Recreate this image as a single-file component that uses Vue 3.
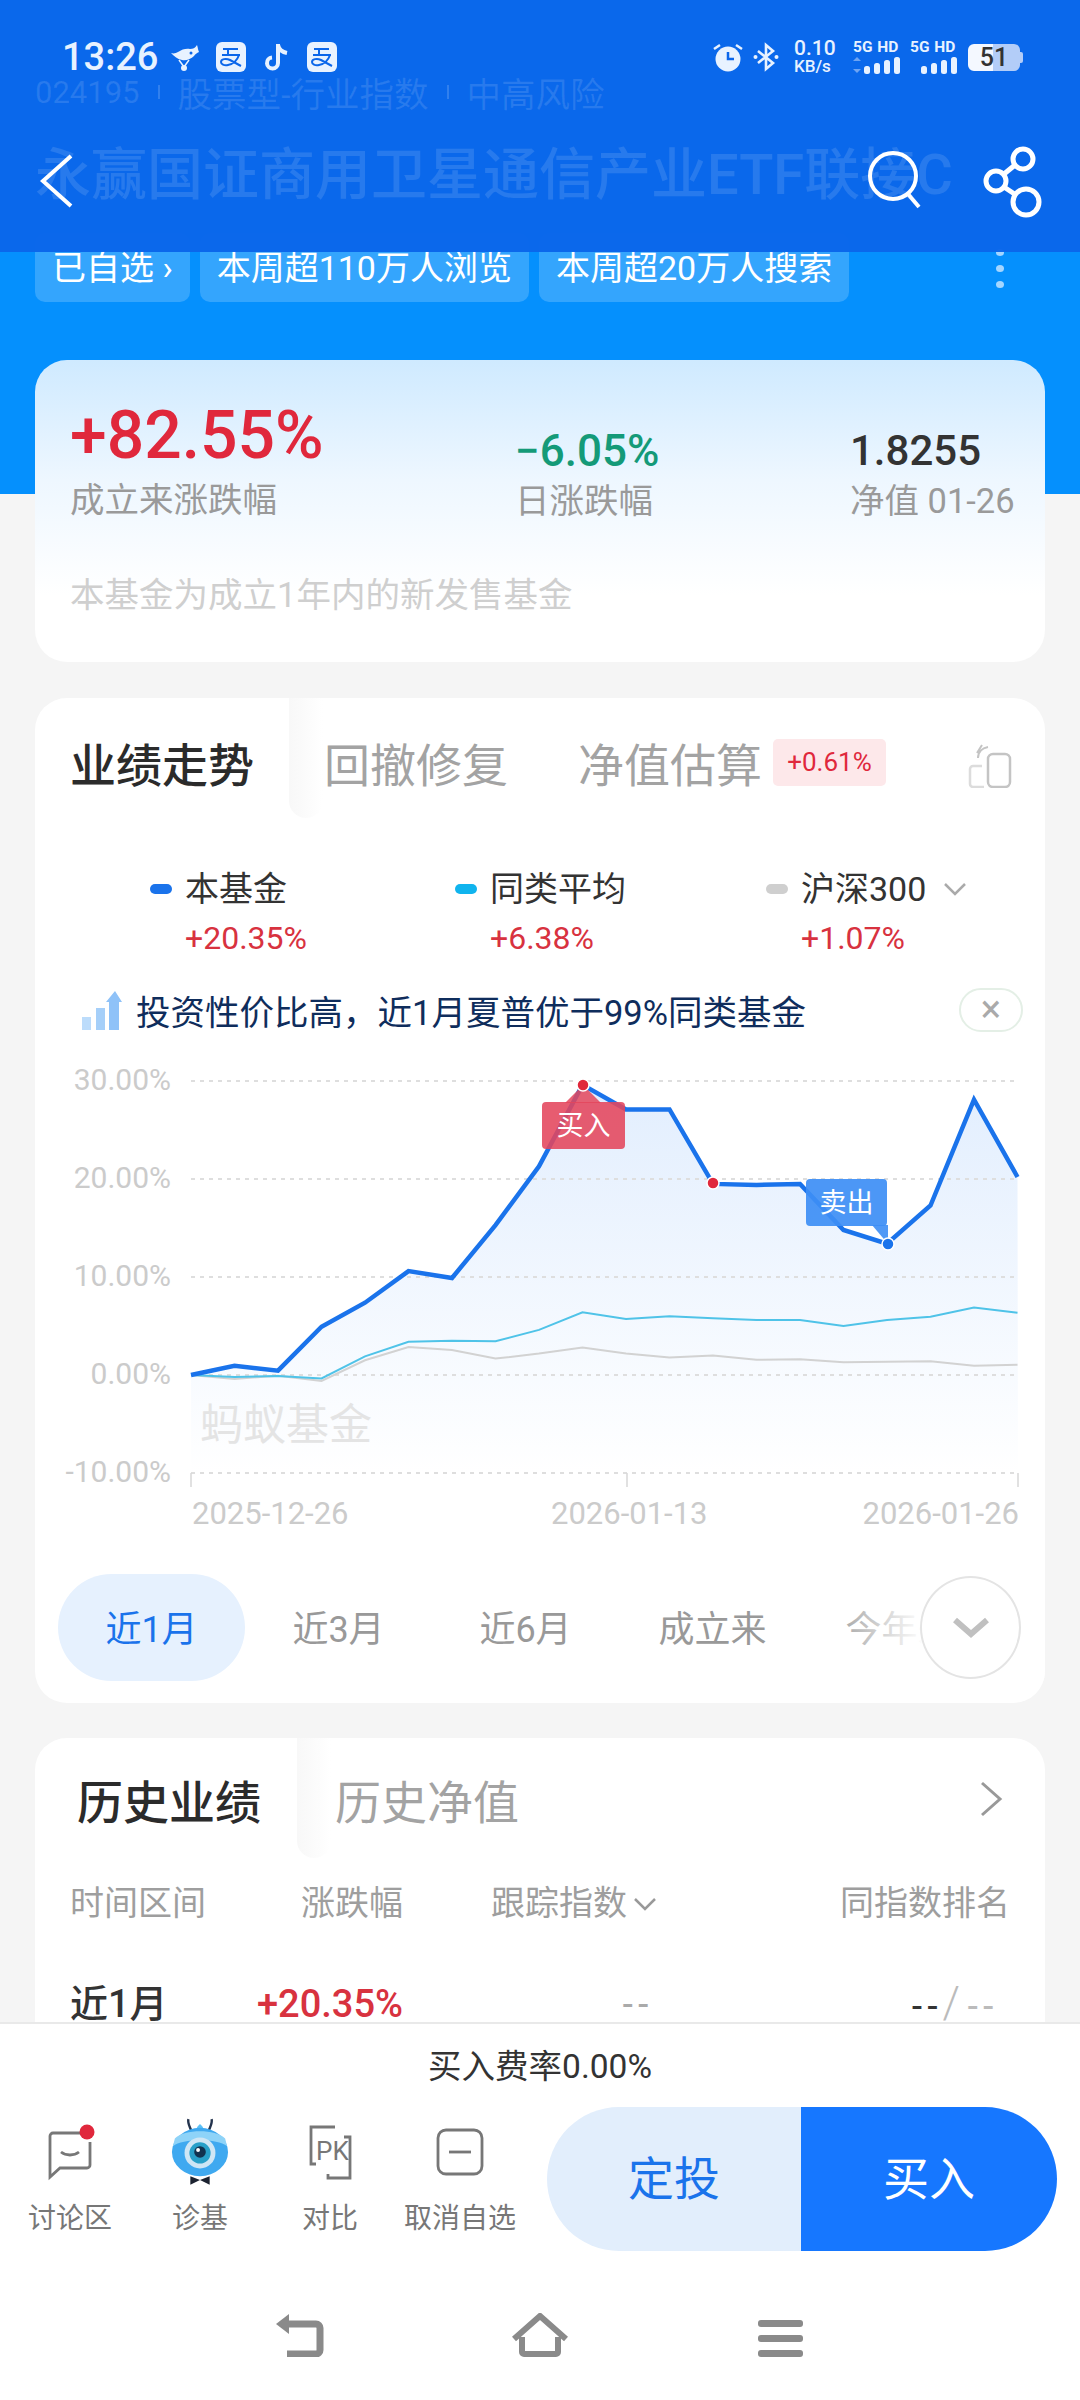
<template>
  <div class="page">
    <header class="top">
      <div class="status">
        <span class="time">13:26</span>
        <svg class="ic-bird" viewBox="0 0 30 30"><path d="M1 11c3 1 5 0 7-1 4-3 9-4 12-3 3 0 5-1 7-4 1 3 1 5 2 7-2 1-4 2-5 4-3 3-8 5-12 4-5-1-8-4-11-7z" fill="#e8f2ff"/><path d="M9 18l5 7 5-7" fill="none" stroke="#e8f2ff" stroke-width="1.500"/><circle cx="14" cy="26" r="3" fill="#e8f2ff"/><circle cx="21" cy="11" r="1.500" fill="#0b66ea"/></svg>
        <svg class="ic-pay" viewBox="0 0 30 30"><rect width="30" height="30" rx="6" fill="#e8f2ff"/><path d="M7 7h15M6 13h18M12 7v6M23 13c-2 6-6 9-11 10-4 1-7-1-7-3 0-3 5-4 9-2l11 6" fill="none" stroke="#0b66ea" stroke-width="2"/></svg>
        <svg class="ic-tt" viewBox="0 0 28 30"><path d="M15 2v19a5.500 5.500 0 1 1-6-5.500M15 3c1 5 4 7 9 8" fill="none" stroke="#e8f2ff" stroke-width="4"/></svg>
        <svg class="ic-pay second" viewBox="0 0 30 30"><rect width="30" height="30" rx="6" fill="#e8f2ff"/><path d="M7 7h15M6 13h18M12 7v6M23 13c-2 6-6 9-11 10-4 1-7-1-7-3 0-3 5-4 9-2l11 6" fill="none" stroke="#0b66ea" stroke-width="2"/></svg>
        <div class="status-right">
          <svg class="ic-alarm" viewBox="0 0 30 30"><circle cx="15" cy="17" r="12.500" fill="#e8f2ff"/><path d="M15 10v7h6" fill="none" stroke="#0b66ea" stroke-width="2.500"/><path d="M1 7l6-4M29 7l-6-4" stroke="#e8f2ff" stroke-width="2.500"/></svg>
          <svg class="ic-bt" viewBox="0 0 26 30"><path d="M5 9l15 12-7 6V3l7 6L5 21" fill="none" stroke="#e8f2ff" stroke-width="2.600"/><circle cx="2.500" cy="15" r="2" fill="#e8f2ff"/><circle cx="23.500" cy="15" r="2" fill="#e8f2ff"/></svg>
          <div class="speed"><b>0.10</b><i>KB/s</i></div>
          <div class="net">
            <span>5G HD</span>
            <svg viewBox="0 0 48 18"><path d="M4 1l4 4H0zM4 17l4-4H0z" fill="#6fa4f2"/><rect x="11" y="10" width="6" height="8" rx="2.500"/><rect x="21" y="7" width="6" height="11" rx="2.500"/><rect x="31" y="4" width="6" height="14" rx="2.500"/><rect x="41" y="1" width="6" height="17" rx="2.500"/></svg>
          </div>
          <div class="net">
            <span>5G HD</span>
            <svg viewBox="0 0 48 18"><rect x="11" y="10" width="6" height="8" rx="2.500"/><rect x="21" y="7" width="6" height="11" rx="2.500"/><rect x="31" y="4" width="6" height="14" rx="2.500"/><rect x="41" y="1" width="6" height="17" rx="2.500"/></svg>
          </div>
          <div class="battery"><span>51</span></div>
        </div>
      </div>
      <div class="sub"><span class="code">024195</span><em></em>股票型-行业指数<em></em>中高风险</div>
      <div class="title">永赢国证商用卫星通信产业ETF联接C</div>
      <svg class="nav-icons" viewBox="0 0 1080 252">
        <path d="M71 156L43 181l28 25" fill="none" stroke="#fff" stroke-width="4"/>
        <circle cx="893" cy="176" r="23" fill="none" stroke="#fff" stroke-width="4"/>
        <path d="M908 194l11 13" stroke="#fff" stroke-width="4"/>
        <g fill="none" stroke="#fff" stroke-width="5">
          <circle cx="1023" cy="159" r="10"/>
          <circle cx="996" cy="181" r="10"/>
          <circle cx="1026" cy="202" r="13"/>
          <path d="M1015 165l-11 9M1004 187l12 8"/>
        </g>
      </svg>
    </header>

    <main class="main">
      <div class="tags">
        <span class="tag">已自选 <small>›</small></span>
        <span class="tag">本周超110万人浏览</span>
        <span class="tag">本周超20万人搜索</span>
        <div class="dots"><i></i><i></i><i></i></div>
      </div>

      <section class="card summary">
        <div class="stats">
          <div>
            <div class="big red">+82.55%</div>
            <div class="lbl">成立来涨跌幅</div>
          </div>
          <div class="stat-sm">
            <div class="mid green">−6.05%</div>
            <div class="lbl">日涨跌幅</div>
          </div>
          <div class="stat-sm">
            <div class="mid dark small-val">1.8255</div>
            <div class="lbl">净值 01-26</div>
          </div>
        </div>
        <div class="notice">本基金为成立1年内的新发售基金</div>
      </section>

      <section class="card trend">
        <div class="tabs">
          <span class="tab on">业绩走势</span>
          <i class="tab-shade"></i>
          <span class="tab t2">回撤修复</span>
          <span class="tab t3">净值估算</span>
          <span class="badge">+0.61%</span>
          <svg class="ic-copy" viewBox="0 0 44 44"><rect x="20" y="10" width="22" height="33" rx="5" fill="none" stroke="#c4c4c4" stroke-width="2.500"/><path d="M14 22H5a3 3 0 0 0-3 3v15a3 3 0 0 0 3 3h11" fill="none" stroke="#dcdcdc" stroke-width="2.500"/><path d="M10 14c0-6 4-10 10-11M14 1l-5 8" fill="none" stroke="#c4c4c4" stroke-width="2"/></svg>
        </div>

        <div class="legend">
          <div v-for="item in legend" :key="item.name" class="legend-item" :class="item.cls">
            <div class="legend-name">
              <i class="dash"></i>{{ item.name }}
              <svg v-if="item.more" class="legend-arrow" viewBox="0 0 24 14"><path d="M2 2l10 10L22 2" fill="none" stroke="#aaa" stroke-width="2.500"/></svg>
            </div>
            <div class="legend-val">{{ item.value }}</div>
          </div>
        </div>

        <div class="tip">
          <svg class="ic-bars" viewBox="0 0 40 40"><rect x="0" y="27" width="9" height="13" fill="#bcdcfb"/><rect x="14" y="18" width="9" height="22" fill="#a5cff9"/><path d="M27 40V12h-3l9-11 7 11h-3v28z" fill="#8fc2f8"/></svg>
          <span>投资性价比高，近1月夏普优于99%同类基金</span>
          <span class="tip-close">×</span>
        </div>

        <svg class="chart" viewBox="35 1050 1010 490">
          <defs>
            <linearGradient id="areaFill" x1="0" y1="0" x2="0" y2="1">
              <stop offset="0" stop-color="#e2eefe"/>
              <stop offset="1" stop-color="#ffffff"/>
            </linearGradient>
          </defs>
          <path :d="areaPath" fill="url(#areaFill)"/>
          <line v-for="g in grid" :key="g.label" x1="191" x2="1018" :y1="g.y" :y2="g.y" stroke="#dedede" stroke-width="2" stroke-dasharray="4 5"/>
          <text v-for="g in grid" :key="'t' + g.label" x="171" :y="g.y + 9" text-anchor="end" class="axis">{{ g.label }}</text>
          <path d="M191 1473v14M627 1473v14M1018 1473v14" stroke="#d8d8d8" stroke-width="1.500"/>
          <text x="192" y="1524" class="date">2025-12-26</text>
          <text x="551" y="1524" class="date">2026-01-13</text>
          <text x="1019" y="1524" text-anchor="end" class="date">2026-01-26</text>
          <text x="200" y="1440" class="mark">蚂蚁基金</text>
          <polyline :points="grayLine" fill="none" stroke="#d2d2d2" stroke-width="2"/>
          <polyline :points="tealLine" fill="none" stroke="#4fc3e8" stroke-width="2"/>
          <polyline :points="blueLine" fill="none" stroke="#1a73eb" stroke-width="4.500"/>
          <path d="M565 1103l18-18 18 18z" fill="#e4465c" opacity=".85"/>
          <rect x="542" y="1102" width="83" height="47" rx="4" fill="#e4465c" opacity=".88"/>
          <text x="583.500" y="1135" text-anchor="middle" class="flag">买入</text>
          <path d="M872 1225l16 19 0-19z" fill="#3d8ef5" opacity=".9"/>
          <rect x="806" y="1179" width="81" height="47" rx="4" fill="#3d8ef5" opacity=".92"/>
          <text x="846.500" y="1212" text-anchor="middle" class="flag">卖出</text>
          <circle cx="583" cy="1085" r="6" fill="#e0283c" stroke="#fff" stroke-width="1.500"/>
          <circle cx="713" cy="1183" r="6" fill="#e0283c" stroke="#fff" stroke-width="1.500"/>
          <circle cx="888" cy="1244" r="6" fill="#1a73eb" stroke="#fff" stroke-width="1.500"/>
        </svg>

        <div class="ranges">
          <span v-for="(r, i) in ranges" :key="r" class="range" :class="{ on: i === 0 }">{{ r }}</span>
          <div class="range-fade"></div>
          <div class="range-more">
            <svg viewBox="0 0 40 22"><path d="M4 3l16 14L36 3" fill="none" stroke="#c0c0c0" stroke-width="6"/></svg>
          </div>
        </div>
      </section>

      <section class="card history">
        <div class="hist-tabs">
          <span class="tab on">历史业绩</span>
          <i class="tab-shade"></i>
          <span class="tab h2">历史净值</span>
          <svg class="hist-arrow" viewBox="0 0 24 36"><path d="M3 2l18 16L3 34" fill="none" stroke="#999" stroke-width="3"/></svg>
        </div>
        <div class="hist-head">
          <span class="c1">时间区间</span>
          <span class="c2">涨跌幅</span>
          <span class="c3">跟踪指数<svg viewBox="0 0 24 14"><path d="M2 2l10 10L22 2" fill="none" stroke="#999" stroke-width="2.500"/></svg></span>
          <span class="c4">同指数排名</span>
        </div>
        <div class="hist-row">
          <span class="c1 name">近1月</span>
          <span class="c2 pct">+20.35%</span>
          <span class="c3 none">--</span>
          <span class="c4 rank"><b>--</b><u>/</u>--</span>
        </div>
      </section>
    </main>

    <footer class="bottom">
      <div class="fee">买入费率0.00%</div>
      <div class="actions">
        <div class="act">
          <svg viewBox="0 0 60 60"><path d="M40 11H13a3 3 0 0 0-3 3v41l10-9h27a3 3 0 0 0 3-3V20" fill="none" stroke="#777" stroke-width="2.800"/><path d="M21 30c5 4 13 4 18 0" fill="none" stroke="#777" stroke-width="2.800"/><circle cx="47" cy="10" r="7.500" fill="#e0283c"/></svg>
          <span>讨论区</span>
        </div>
        <div class="act">
          <svg class="mascot" viewBox="0 0 60 70">
            <path d="M21 14c-2-5-4-8-3-12M39 14c2-5 4-8 3-12" fill="none" stroke="#23334d" stroke-width="2.500"/>
            <path d="M30 7c8 7 0 9 0 9s-8-2 0-9z" fill="#5cc1f5"/>
            <ellipse cx="30" cy="36" rx="29" ry="25" fill="#3fa9f0"/>
            <path d="M2 30c10-8 46-8 56 0l-2-8c-10-10-42-10-52 0z" fill="#8ed3f8"/>
            <circle cx="30" cy="37" r="16" fill="#cfe6f5"/>
            <circle cx="30" cy="37" r="11" fill="#29a0c9"/>
            <circle cx="30" cy="36" r="6" fill="#12324f"/>
            <circle cx="28" cy="34" r="2" fill="#fff"/>
            <path d="M20 70l10-5 10 5v-9l-10 4-10-4z" fill="#1c2331"/>
          </svg>
          <span>诊基</span>
        </div>
        <div class="act">
          <svg viewBox="0 0 60 60"><path d="M16 42h-5V5h24" fill="none" stroke="#777" stroke-width="2.800"/><path d="M44 15h6v41H28v-4" fill="none" stroke="#777" stroke-width="2.800"/><text x="16" y="38" class="pk">PK</text></svg>
          <span>对比</span>
        </div>
        <div class="act">
          <svg viewBox="0 0 60 60"><rect x="8" y="8" width="44" height="44" rx="8" fill="none" stroke="#777" stroke-width="2.800"/><path d="M19 30h22" stroke="#777" stroke-width="2.800"/></svg>
          <span>取消自选</span>
        </div>
        <div class="btns">
          <div class="btn plan">定投</div>
          <div class="btn buy">买入</div>
        </div>
      </div>
      <div class="sysnav">
        <svg class="s-back" viewBox="0 0 50 44"><path d="M1 11L14 1v20z" fill="#8a8a8a"/><path d="M12 11h29a4 4 0 0 1 4 4v22a4 4 0 0 1-4 4H12" fill="none" stroke="#8a8a8a" stroke-width="7"/></svg>
        <svg class="s-home" viewBox="0 0 58 44"><path d="M3 26L29 3l26 23" fill="none" stroke="#8a8a8a" stroke-width="6"/><path d="M11 24v15a2 2 0 0 0 2 2h32a2 2 0 0 0 2-2V24" fill="none" stroke="#8a8a8a" stroke-width="6"/></svg>
        <div class="s-menu"><i></i><i></i><i></i></div>
      </div>
    </footer>
  </div>
</template>

<script setup>
const legend = [
  { name: '本基金', value: '+20.35%', cls: 'l-blue' },
  { name: '同类平均', value: '+6.38%', cls: 'l-teal' },
  { name: '沪深300', value: '+1.07%', cls: 'l-gray', more: true }
]

const ranges = ['近1月', '近3月', '近6月', '成立来', '今年来']

const blue = [0, 0.95, 0.44, 4.93, 7.38, 10.6, 9.9, 15.3, 21.3, 29.6, 27.1, 27.1, 19.5, 19.4, 19.5, 14.8, 13.4, 17.3, 28.1, 20.2]
const teal = [0, -0.2, -0.1, -0.35, 1.9, 3.4, 3.5, 3.45, 4.6, 6.4, 5.7, 6.0, 5.8, 5.6, 5.6, 5.0, 5.6, 5.95, 6.9, 6.35]
const gray = [0, -0.4, -0.07, -0.6, 1.5, 2.85, 2.55, 1.67, 2.18, 2.82, 2.2, 1.8, 2, 1.56, 1.6, 1.3, 1.36, 1.4, 0.95, 1.05]

const toPoints = (list) =>
  list.map((v, i) => `${(191 + i * 43.5).toFixed(1)},${(1375 - v * 9.8).toFixed(1)}`).join(' ')

const blueLine = toPoints(blue)
const tealLine = toPoints(teal)
const grayLine = toPoints(gray)
const areaPath = `M191,1473 L${blueLine.replaceAll(' ', ' L')} L1018,1473 Z`

const grid = [
  { label: '30.00%', y: 1081 },
  { label: '20.00%', y: 1179 },
  { label: '10.00%', y: 1277 },
  { label: '0.00%', y: 1375 },
  { label: '-10.00%', y: 1473 }
]
</script>

<style>
html, body {
  margin: 0;
  background: #f5f5f5;
}
</style>

<style scoped>
.page {
  position: relative;
  width: 1080px;
  height: 2400px;
  overflow: hidden;
  display: flex;
  flex-direction: column;
  font-family: Roboto, "Noto Sans CJK SC", sans-serif;
  background: linear-gradient(#0590fd 0 494px, #f5f5f5 494px);
}

/* header sits over the scrolled page */
.top {
  position: absolute;
  left: 0;
  top: 0;
  width: 100%;
  height: 252px;
  background: rgba(10, 102, 234, 0.97);
  z-index: 5;
}
.status {
  display: flex;
  align-items: center;
  height: 34px;
  padding: 40px 60px 0 62px;
  color: #e8f2ff;
}
.time {
  font-size: 38px;
  line-height: 34px;
  font-weight: 500;
  width: 108px;
}
.ic-bird { width: 30px; height: 30px; }
.ic-pay { width: 30px; height: 30px; margin-left: 16px; }
.ic-pay.second { margin-left: 16px; }
.ic-tt { width: 28px; height: 30px; margin-left: 17px; }
.status-right {
  margin-left: auto;
  display: flex;
  align-items: center;
}
.ic-alarm { width: 30px; height: 30px; }
.ic-bt { width: 26px; height: 30px; margin-left: 10px; }
.speed {
  margin-left: 15px;
  width: 50px;
  display: flex;
  flex-direction: column;
  line-height: 18px;
}
.speed b { font-size: 21px; font-weight: 500; }
.speed i { font-size: 17px; font-style: normal; font-weight: 500; }
.net {
  width: 48px;
  margin-left: 9px;
  display: flex;
  flex-direction: column;
  gap: 1px;
}
.net span {
  font-size: 15.5px;
  font-weight: 700;
  line-height: 15px;
  white-space: nowrap;
  word-spacing: 1px;
}
.net svg {
  width: 48px;
  height: 18px;
  fill: #e8f2ff;
}
.battery {
  position: relative;
  width: 52px;
  height: 27px;
  margin-left: 10px;
  border-radius: 6px;
  background: linear-gradient(90deg, #f4f8ff 0 25px, #b3cdf8 25px);
  color: #333;
  font-size: 25px;
  font-weight: 500;
  line-height: 27px;
  text-align: center;
}
.battery::after {
  content: "";
  position: absolute;
  right: -3px;
  top: 8px;
  width: 3px;
  height: 11px;
  border-radius: 0 2px 2px 0;
  background: #b3cdf8;
}
.sub {
  display: flex;
  align-items: center;
  margin: 0 0 0 35px;
  height: 36px;
  font-size: 34.500px;
  color: rgba(255, 255, 255, 0.12);
}
.code { font-size: 31px; }
.sub em {
  width: 2px;
  height: 14px;
  margin: 0 18px;
  background: rgba(255, 255, 255, 0.16);
}
.title {
  margin: 30px 0 0 35px;
  height: 70px;
  line-height: 70px;
  font-size: 56px;
  font-weight: 500;
  white-space: nowrap;
  color: rgba(255, 255, 255, 0.12);
}
.nav-icons {
  position: absolute;
  left: 0;
  top: 0;
  width: 1080px;
  height: 252px;
}

.main {
  height: 2022px;
  overflow: hidden;
  padding: 233px 35px 0;
  box-sizing: border-box;
}
.tags {
  display: flex;
  align-items: center;
  gap: 10px;
  height: 69px;
}
.tag {
  height: 69px;
  line-height: 71px;
  padding: 0 17px;
  border-radius: 10px;
  background: rgba(255, 255, 255, 0.19);
  color: #fff;
  font-size: 34px;
  white-space: nowrap;
}
.tag small { font-size: 34px; }
.dots {
  margin-left: auto;
  margin-right: 41px;
  display: flex;
  flex-direction: column;
  gap: 9px;
  padding-top: 2px;
}
.dots i {
  width: 8px;
  height: 7px;
  border-radius: 50%;
  background: #a5d6ff;
}

.card {
  position: relative;
  background: #fff;
  border-radius: 32px;
  overflow: hidden;
}
.summary {
  margin-top: 58px;
  height: 302px;
  padding: 37px 0 0 35px;
  box-sizing: border-box;
  background: linear-gradient(#cfeaff 0, #eef7ff 40%, #fff 78%);
}
.stats {
  display: grid;
  grid-template-columns: 445px 335px 1fr;
}
.big {
  font-size: 66px;
  font-weight: 500;
  line-height: 78px;
}
.stat-sm { padding-top: 29px; }
.mid {
  font-size: 44px;
  font-weight: 500;
  line-height: 50px;
}
.small-val {
  font-size: 42px;
  font-weight: 500;
}
.red { color: #e0283c; }
.green { color: #149a78; }
.dark { color: #333; }
.lbl {
  margin-top: 2px;
  font-size: 34.500px;
  line-height: 46px;
  color: #9a9a9a;
}
.notice {
  margin-top: 48px;
  font-size: 34.500px;
  line-height: 46px;
  color: #cfcfcf;
}

.trend {
  margin-top: 36px;
  height: 1005px;
}
.tabs {
  display: flex;
  align-items: center;
  height: 128px;
  padding-left: 35px;
  margin-bottom: 4px;
}
.tab {
  font-size: 46px;
  color: #a3a3a3;
  white-space: nowrap;
}
.tab.on {
  color: #2b2b2b;
  font-weight: 500;
}
.tab-shade {
  position: absolute;
  top: 0;
  left: 254px;
  width: 34px;
  height: 120px;
  background: linear-gradient(90deg, #f3f3f3, #fff);
  border-radius: 0 0 20px 20px;
  opacity: 0.6;
}
.t2 { margin-left: 70px; }
.t3 { margin-left: 70px; }
.badge {
  margin-left: 11px;
  width: 113px;
  height: 47px;
  line-height: 47px;
  text-align: center;
  border-radius: 5px;
  background: #fde8ea;
  color: #e0283c;
  font-size: 26px;
}
.ic-copy {
  width: 44px;
  height: 44px;
  margin-left: auto;
  margin-right: 33px;
  margin-top: 8px;
}

.legend {
  display: flex;
  height: 155px;
  padding-left: 115px;
}
.legend-item {
  flex: none;
  width: 305px;
}
.l-teal { width: 311px; }
.legend-name {
  position: relative;
  padding-left: 35px;
  font-size: 34px;
  line-height: 50px;
  margin-top: 34px;
  color: #333;
  white-space: nowrap;
}
.dash {
  position: absolute;
  left: 0;
  top: 20px;
  width: 22px;
  height: 10px;
  border-radius: 5px;
}
.l-blue .dash { background: #1a73eb; }
.l-teal .dash { background: #10b4ee; }
.l-gray .dash { background: #cfcfcf; }
.legend-arrow {
  width: 24px;
  height: 14px;
  margin-left: 8px;
  vertical-align: 5px;
}
.legend-val {
  padding-left: 35px;
  margin-top: 1px;
  font-size: 32px;
  line-height: 46px;
  color: #d8323f;
}
.tip {
  display: flex;
  align-items: center;
  height: 60px;
  margin-top: -5px;
  padding-left: 47px;
  font-size: 34.500px;
  color: #0f2d5c;
}
.ic-bars { width: 40px; height: 40px; margin-right: 14px; }
.tip-close {
  position: absolute;
  right: 22px;
  width: 60px;
  height: 40px;
  line-height: 38px;
  text-align: center;
  border: 2px solid #e4efe6;
  border-radius: 22px;
  color: #aaa;
  font-size: 38px;
}
.chart {
  display: block;
  width: 1010px;
  height: 490px;
  margin-top: 10px;
}
.axis {
  font-size: 30px;
  fill: #cbcbcb;
}
.date {
  font-size: 31px;
  fill: #cbcbcb;
}
.mark {
  font-size: 43px;
  fill: #e4e4e4;
}
.flag {
  font-size: 27px;
  fill: #fff;
}
.ranges {
  position: relative;
  display: flex;
  align-items: center;
  height: 107px;
  margin-top: 34px;
  padding-left: 23px;
  overflow: hidden;
}
.range {
  flex: none;
  width: 187px;
  height: 107px;
  line-height: 112px;
  text-align: center;
  border-radius: 54px;
  font-size: 36px;
  color: #999;
}
.range.on {
  background: #e6f1fe;
  color: #1a73eb;
}
.range-fade {
  position: absolute;
  left: 790px;
  top: 0;
  width: 220px;
  height: 107px;
  background: linear-gradient(90deg, rgba(255, 255, 255, 0), #fff 45%);
}
.range-more {
  position: absolute;
  left: 885px;
  top: 2px;
  width: 101px;
  height: 103px;
  box-sizing: border-box;
  display: flex;
  align-items: center;
  justify-content: center;
  border: 2px solid #e4e4e4;
  border-radius: 50%;
  background: #fff;
}
.range-more svg { width: 40px; height: 22px; }

.history {
  margin-top: 35px;
  height: 420px;
}
.hist-tabs {
  position: relative;
  display: flex;
  align-items: center;
  height: 121px;
  padding-left: 42px;
}
.hist-tabs .tab-shade { left: 262px; }
.h2 { margin-left: 74px; }
.hist-arrow {
  position: absolute;
  right: 42px;
  width: 24px;
  height: 36px;
}
.hist-head,
.hist-row {
  position: relative;
  height: 46px;
}
.hist-head {
  margin-top: 21px;
  font-size: 34px;
  line-height: 46px;
  color: #9e9e9e;
}
.hist-head svg {
  width: 24px;
  height: 14px;
  margin-left: 6px;
  vertical-align: 4px;
}
.hist-row {
  margin-top: 55px;
  line-height: 46px;
}
.c1, .c2, .c3, .c4 {
  position: absolute;
  top: 0;
  white-space: nowrap;
}
.c1 { left: 35px; }
.c2 { right: 642px; }
.c3 { left: 456px; }
.c4 { right: 35px; }
.name {
  font-size: 38px;
  font-weight: 500;
  color: #333;
}
.pct {
  font-size: 38px;
  font-weight: 500;
  color: #d8323f;
}
.none {
  left: 587px;
  font-size: 34px;
  font-weight: 500;
  letter-spacing: 4px;
  color: #aaa;
}
.rank {
  right: 47px;
  font-size: 34px;
  letter-spacing: 4px;
  color: #bbb;
  font-weight: 500;
}
.rank b {
  color: #333;
  font-weight: 500;
}
.rank u {
  text-decoration: none;
  font-size: 44px;
  font-weight: 300;
  margin: 0 3px 0 0;
  line-height: 1;
}

.bottom {
  position: relative;
  height: 378px;
  box-sizing: border-box;
  border-top: 2px solid #e9e9e9;
  background: #fff;
}
.fee {
  padding-top: 21px;
  height: 44px;
  line-height: 44px;
  text-align: center;
  font-size: 33.500px;
  color: #333;
}
.actions {
  display: flex;
  align-items: flex-start;
  padding: 18px 0 0 5px;
}
.act {
  flex: none;
  width: 130px;
  padding-top: 15px;
  display: flex;
  flex-direction: column;
  align-items: center;
  font-size: 28px;
  line-height: 40px;
  color: #777;
}
.act svg {
  width: 60px;
  height: 60px;
  margin-bottom: 17px;
}
.act svg.mascot {
  width: 58px;
  height: 70px;
  margin: -6px 0 13px;
}
.pk {
  font-size: 26px;
  fill: #777;
}
.btns {
  display: flex;
  margin-left: 22px;
  width: 510px;
  height: 144px;
  border-radius: 72px;
  overflow: hidden;
}
.btn {
  height: 144px;
  line-height: 144px;
  text-align: center;
  font-size: 46px;
}
.plan {
  width: 254px;
  background: #e2eefc;
  color: #1a73eb;
}
.buy {
  width: 256px;
  background: #1677ff;
  color: #fff;
}
.sysnav {
  position: absolute;
  left: 0;
  top: 288px;
  width: 100%;
  height: 46px;
}
.s-back { position: absolute; left: 275px; top: 1px; width: 50px; height: 44px; }
.s-home { position: absolute; left: 511px; top: 1px; width: 58px; height: 44px; }
.s-menu {
  position: absolute;
  left: 758px;
  top: 8px;
  width: 45px;
  display: flex;
  flex-direction: column;
  gap: 8px;
}
.s-menu i {
  height: 7px;
  border-radius: 3px;
  background: #8a8a8a;
}
</style>
